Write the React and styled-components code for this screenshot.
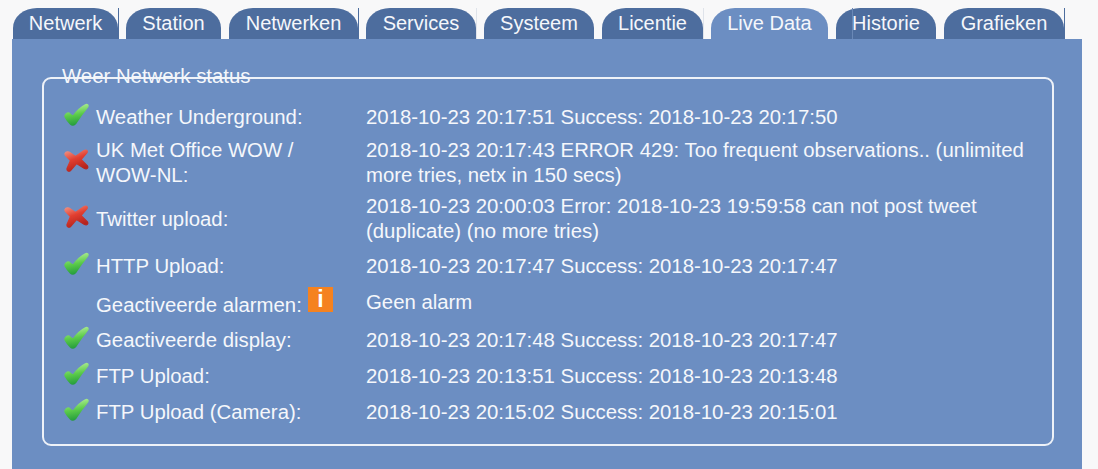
import React from 'react'
import styled, { createGlobalStyle } from 'styled-components'

const tabs = [
    { label: 'Netwerk', width: 105, line: '#4d6d9e' },
    { label: 'Station', width: 95 },
    { label: 'Netwerken', width: 129, line: '#4d6d9e' },
    { label: 'Services', width: 110, line: '#dfe3ea' },
    { label: 'Systeem', width: 110 },
    { label: 'Licentie', width: 101, line: '#dfe3ea' },
    { label: 'Live Data', width: 117, active: true },
    { label: 'Historie', width: 100, seam: true },
    { label: 'Grafieken', width: 120, line: '#4d6d9e' },
]

const rows = [
    { status: 'ok', label: 'Weather Underground:', value: '2018-10-23 20:17:51 Success: 2018-10-23 20:17:50' },
    { status: 'fail', label: 'UK Met Office WOW / WOW-NL:', value: '2018-10-23 20:17:43 ERROR 429: Too frequent observations.. (unlimited more tries, netx in 150 secs)' },
    { status: 'fail', label: 'Twitter upload:', value: '2018-10-23 20:00:03 Error: 2018-10-23 19:59:58 can not post tweet (duplicate) (no more tries)' },
    { status: 'ok', label: 'HTTP Upload:', value: '2018-10-23 20:17:47 Success: 2018-10-23 20:17:47', gap: 1 },
    { label: 'Geactiveerde alarmen:', value: 'Geen alarm', alarm: true },
    { status: 'ok', label: 'Geactiveerde display:', value: '2018-10-23 20:17:48 Success: 2018-10-23 20:17:47', gap: 2 },
    { status: 'ok', label: 'FTP Upload:', value: '2018-10-23 20:13:51 Success: 2018-10-23 20:13:48' },
    { status: 'ok', label: 'FTP Upload (Camera):', value: '2018-10-23 20:15:02 Success: 2018-10-23 20:15:01' },
]

const CheckIcon = () => (
    <svg width="28" height="26" viewBox="0 0 28 26">
        <defs>
            <linearGradient id="checkFill" x1="0.3" y1="0" x2="0.5" y2="1">
                <stop offset="0" stopColor="#b4ee98" />
                <stop offset="0.5" stopColor="#5ccc4a" />
                <stop offset="1" stopColor="#249c3c" />
            </linearGradient>
        </defs>
        <path
            d="M2 14 C3 11 5.5 10.5 7 12 L10 14.5 C13.5 9.5 17.5 5.5 22.5 3 C24.5 2 25.5 3.5 24.5 5 C20.5 10 16 16 12.5 21.5 C11 23.5 9 23.5 7.5 22 C5.5 20 3.5 17.5 2.5 15.5 Z"
            fill="url(#checkFill)"
            stroke="url(#checkFill)"
            strokeWidth="1.6"
            strokeLinejoin="round"
        />
    </svg>
)

const CrossIcon = () => (
    <svg width="28" height="26" viewBox="0 0 28 26">
        <defs>
            <linearGradient id="crossFill" x1="0" y1="0" x2="0.4" y2="1">
                <stop offset="0" stopColor="#f49a8a" />
                <stop offset="0.5" stopColor="#e23f30" />
                <stop offset="1" stopColor="#b5241d" />
            </linearGradient>
        </defs>
        <path
            d="M2 5.5 C3 3.5 5.5 3.5 7.5 5 L12.5 8.5 L21 2.5 C23 1.5 25 2.5 24 4.5 L18 11.5 L24.5 18 C25.5 20 24 21.5 21.5 20.5 L13.5 15.5 L7.5 22.5 C6 24 3.5 23 4 20.5 L7.5 12.5 L3 8 C2.2 7.2 1.8 6.4 2 5.5 Z"
            fill="url(#crossFill)"
            stroke="url(#crossFill)"
            strokeWidth="1.2"
            strokeLinejoin="round"
        />
    </svg>
)

const App = () => {
    return (
        <Page>
            <GlobalStyle />
            <TabBar>
                {tabs.map(tab => (
                    <Tab key={tab.label} $width={tab.width} $active={tab.active} $line={tab.line} $seam={tab.seam}>
                        {tab.label}
                    </Tab>
                ))}
            </TabBar>
            <Panel>
                <Frame>
                    <Legend>Weer Netwerk status</Legend>
                    {rows.map(row => (
                        <Row key={row.label} $gap={row.gap}>
                            <IconCell>
                                {row.status === 'ok' && <CheckIcon />}
                                {row.status === 'fail' && <CrossIcon />}
                            </IconCell>
                            <Label $lowered={row.alarm}>
                                {row.label}
                                {row.alarm && <AlarmBadge>i</AlarmBadge>}
                            </Label>
                            <Value>{row.value}</Value>
                        </Row>
                    ))}
                </Frame>
            </Panel>
        </Page>
    )
}

const GlobalStyle = createGlobalStyle`
    html, body {
        margin: 0;
        height: 469px;
        overflow: hidden;
        background: #f8f8f9;
    }
`

const Page = styled.div`
    width: 1098px;
    height: 469px;
    box-sizing: border-box;
    padding: 8px 16px 0 12px;
    font-family: 'Liberation Sans', Arial, sans-serif;
    font-size: 20.35px;
    color: #f5f7fb;
    display: flex;
    flex-direction: column;
`

const TabBar = styled.div`
    display: flex;
    gap: 8px;
    height: 31px;
    padding-left: 1px;
`

const Tab = styled.div`
    position: relative;
    width: ${props => props.$width}px;
    height: 31px;
    line-height: 31px;
    font-size: 20px;
    text-align: center;
    background: ${props => props.$active ? '#6c8ec2' : '#4d6d9e'};
    border-radius: 24px 24px 0 0 / 20px 20px 0 0;

    &::after {
        content: '';
        display: ${props => props.$line ? 'block' : 'none'};
        position: absolute;
        top: 0;
        bottom: 0;
        right: -1px;
        width: 1px;
        background: ${props => props.$line};
    }

    &::before {
        content: '';
        display: ${props => props.$seam ? 'block' : 'none'};
        position: absolute;
        top: 0;
        bottom: 0;
        left: 16px;
        width: 1px;
        background: #6a88b6;
    }
`

const Panel = styled.div`
    flex: 1;
    background: #6c8ec2;
    padding: 38px 28px 0 30px;
`

const Frame = styled.div`
    position: relative;
    height: 369px;
    box-sizing: border-box;
    padding: 20px 0 0 19px;
    border: 2px solid #eef2f8;
    border-radius: 9px;
`

const Legend = styled.div`
    position: absolute;
    top: -15px;
    left: 18px;
    line-height: 25px;
`

const Row = styled.div`
    display: flex;
    align-items: center;
    min-height: 36px;
    margin-top: ${props => props.$gap || 0}px;
    padding: 3px 0;
    box-sizing: border-box;
    line-height: 25px;
`

const IconCell = styled.div`
    width: 33px;
    height: 26px;
    flex: none;
    margin-top: -5px;
    filter: blur(0.4px);
`

const Label = styled.div`
    position: relative;
    width: 270px;
    flex: none;
    padding-right: 30px;
    box-sizing: border-box;
    top: ${props => props.$lowered ? 3 : 0}px;
`

const AlarmBadge = styled.span`
    position: absolute;
    left: 212px;
    top: -6px;
    width: 25px;
    height: 25px;
    line-height: 25px;
    text-align: center;
    background: #f5821f;
    color: #fff;
    font-size: 23px;
    font-weight: bold;
`

const Value = styled.div`
    flex: 1;
    padding-right: 20px;
`

export default App
